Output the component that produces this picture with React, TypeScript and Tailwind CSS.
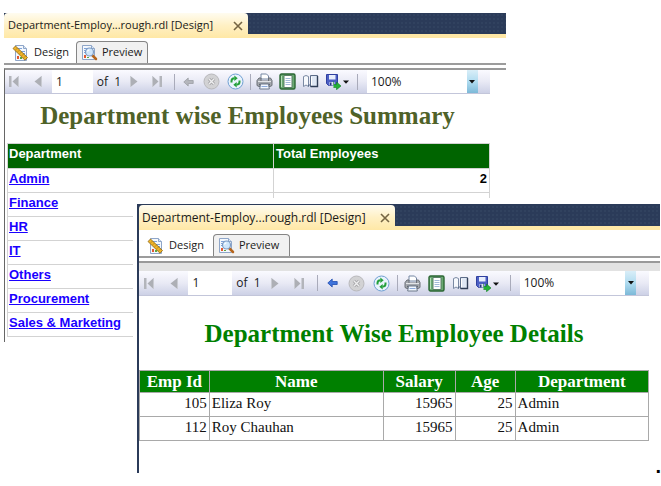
import type { ReactNode } from "react";
import clsx from "clsx";

const uiFont = "font-['Open_Sans','Noto_Sans',sans-serif]";
const serifFont = "font-['Liberation_Serif',serif]";
const sansFont = "font-['Liberation_Sans',sans-serif]";

function DesignIcon() {
  return (
    <svg width="17" height="16" viewBox="0 0 17 16" aria-hidden="true">
      <path d="M3.5.5h8l3 3v12h-11z" fill="#f4f8fd" stroke="#8fa6c8" />
      <path d="M11.5.5v3h3" fill="#dbe6f5" stroke="#8fa6c8" />
      <path d="M6 3.5h4M9 6.5h4M10 8.5h3" stroke="#7fa3da" />
      <path d="M5 11h2v3H5z" fill="#e2572f" />
      <path d="M8 12h2v2H8z" fill="#5aa845" />
      <path d="M1 3.5 3.5 1l12 11.5-2.5 2.7z" fill="#f0b429" stroke="#8b6410" strokeWidth=".8" />
      <path d="m5 3.5-1 1m3 1-1 1m3 1-1 1m3 1-1 1m3 1-1 1" stroke="#7b5710" strokeWidth=".8" />
    </svg>
  );
}

function PreviewIcon() {
  return (
    <svg width="17" height="16" viewBox="0 0 17 16" aria-hidden="true">
      <path d="M1.5.5h9l3 3v11h-12z" fill="#f4f8fd" stroke="#8fa6c8" />
      <path d="M10.5.5v3h3" fill="#dbe6f5" stroke="#8fa6c8" />
      <path d="M3 3.5h3M3 5.5h2M3 7.5h2" stroke="#7fa3da" />
      <path d="M3 10h2v3H3z" fill="#e2572f" />
      <path d="M6 12h2v1H6z" fill="#5aa845" />
      <path d="m11.5 10.500 3.500 3.500" stroke="#b5651d" strokeWidth="2.500" strokeLinecap="round" />
      <circle cx="8.500" cy="7" r="4" fill="#cfe6fb" stroke="#7d9cc4" strokeWidth="1.200" />
      <path d="M6.500 6.500a2.200 2.200 0 0 1 1.900-1.600" fill="none" stroke="#fff" strokeWidth="1.200" />
    </svg>
  );
}

function StepIcon({ end = false, flip = false }: { end?: boolean; flip?: boolean }) {
  return (
    <svg width="12" height="13" viewBox="0 0 12 13" aria-hidden="true" className={clsx(flip && "-scale-x-100")}>
      {end && <path d="M1 1h2.500v11H1z" fill="#b3b5bb" />}
      <path d={end ? "M10.500 1v11L4.500 6.500z" : "M9.500 1v11L2.500 6.500z"} fill="#adafb5" />
      <path d={end ? "M10.500 1v11" : "M9.500 1v11"} stroke="#c9cbd2" />
    </svg>
  );
}

function BackIcon({ active }: { active: boolean }) {
  return (
    <svg width="11" height="10" viewBox="0 0 11 10" aria-hidden="true">
      <path
        d="M.8 5 5.200 1v2.500h5v3h-5V9z"
        fill={active ? "#3f74dc" : "#b4b6bc"}
        stroke={active ? "#214eb0" : "#9c9ea5"}
        strokeWidth=".8"
      />
    </svg>
  );
}

function StopIcon() {
  return (
    <svg width="17" height="17" viewBox="0 0 17 17" aria-hidden="true">
      <circle cx="8.500" cy="8.500" r="7.500" fill="#d2d2d4" stroke="#b9b9bc" />
      <path d="m5.800 5.800 5.400 5.400m0-5.400-5.400 5.400" stroke="#a2a2a5" strokeWidth="3" />
      <path d="m5.800 5.800 5.400 5.400m0-5.400-5.400 5.400" stroke="#eeeeef" strokeWidth="1.400" />
    </svg>
  );
}

function RefreshIcon() {
  return (
    <svg width="17" height="17" viewBox="0 0 17 17" aria-hidden="true">
      <circle cx="8.500" cy="8.500" r="7.500" fill="#e9f3fd" stroke="#6f9fd2" />
      <path d="M4.500 9.500V8q0-2.500 3-2.700" fill="none" stroke="#23a03a" strokeWidth="2" />
      <path d="M7.300 2.500v5.400l3.400-2.700z" fill="#23a03a" />
      <path d="M12.500 7.500V9q0 2.500-3 2.700" fill="none" stroke="#23a03a" strokeWidth="2" />
      <path d="M9.700 9.100v5.400l-3.400-2.700z" fill="#23a03a" />
    </svg>
  );
}

function PrintIcon() {
  return (
    <svg width="17" height="17" viewBox="0 0 17 17" aria-hidden="true">
      <path d="M5 6V1h5.500L12.500 3v3z" fill="#fff" stroke="#7587a3" />
      <path d="M3 5h2v3h7.500V5h2L16 7.500v5l-2 1H3l-2-1v-5z" fill="#a4a8ae" stroke="#6c7178" />
      <path d="M2 8.500h13" stroke="#e3e5e8" />
      <path d="M3 11.500h11" stroke="#63676e" strokeWidth="1.500" />
      <path d="M4.500 11h8l.8 5H3.700z" fill="#f2f7ff" stroke="#6c7889" />
      <path d="M5.500 13.500h6" stroke="#8cabdc" />
    </svg>
  );
}

function LayoutIcon() {
  return (
    <svg width="17" height="17" viewBox="0 0 17 17" aria-hidden="true">
      <rect x="1" y="1" width="15" height="15" rx="1.500" fill="#69a971" stroke="#2b6634" strokeWidth="1.400" />
      <path d="M2.500 3v11" stroke="#b5dcb8" />
      <path d="M5 2.500h8v12H5z" fill="#fff" stroke="#5b7f68" />
      <path d="M6.500 5.500h5m-5 2h5m-5 2h5m-5 2h5" stroke="#a3b9d8" />
    </svg>
  );
}

function PageSetupIcon() {
  return (
    <svg width="17" height="15" viewBox="0 0 17 15" aria-hidden="true">
      <path d="M1.500 2.500 4 1.500l2.500 1v10L4 11l-2.500 1.500z" fill="#f7f9fd" stroke="#7a89a3" />
      <path d="M6.500 12.500V11H8" fill="none" stroke="#596a88" />
      <path d="M8.500 1.500h7v11h-7z" fill="#dfe7f4" stroke="#5d6d89" />
      <path d="M9.500 3v8.500" stroke="#fff" />
      <path d="M15.500 2v10.500h-7" fill="none" stroke="#2f3d56" strokeWidth="1.400" />
    </svg>
  );
}

function ExportIcon() {
  return (
    <svg width="24" height="17" viewBox="0 0 24 17" aria-hidden="true">
      <path d="M1.500 1.500h11v11h-9l-2-2z" fill="#4c5fc4" stroke="#3040a0" />
      <path d="M4 2h6.500v4.500H4z" fill="#e8eefc" />
      <path d="M4.500 9h5v3.500h-5z" fill="#dfe4f4" />
      <path d="M5 9.500h1.500v3H5z" fill="#26347e" />
      <path d="M8.500 8.500v3h3V9l4.500 4-4.500 3.700V14.500H8.500" fill="#25b337" stroke="#138022" strokeWidth=".6" />
      <path d="M18 7.500h6l-3 3.300z" fill="#111" />
    </svg>
  );
}

function ToolButton({ label, start = false, children }: { label: string; start?: boolean; children: ReactNode }) {
  return (
    <button
      type="button"
      aria-label={label}
      className={clsx("flex min-w-0 items-center", start ? "justify-start pl-1" : "justify-center")}
    >
      {children}
    </button>
  );
}

function Separator() {
  return (
    <div className="flex min-w-0 items-center justify-center">
      <div className="h-4 w-px bg-[#a9abba]" />
    </div>
  );
}

function Toolbar({ canGoBack }: { canGoBack: boolean }) {
  return (
    <div
      className={clsx(
        uiFont,
        "grid grid-cols-[19fr_28fr_41fr_32fr_18fr_28fr_8fr_20fr_26fr_22fr_7fr_22fr_24fr_21fr_31fr_12fr_3fr_111fr_12fr] border-b border-[#c3c6da] bg-linear-to-b from-[#fafaff] via-[#e9eaf5] to-[#cdd1e6] text-xs text-[#1a1a1a]",
        canGoBack ? "h-[25px]" : "h-6",
      )}
    >
      <ToolButton label="First page"><StepIcon end /></ToolButton>
      <ToolButton label="Previous page"><StepIcon /></ToolButton>
      <input
        type="text"
        aria-label="Current page"
        defaultValue="1"
        className="min-w-0 bg-white pl-1 outline-none"
      />
      <span className="flex min-w-0 items-center justify-center whitespace-pre">of  1</span>
      <ToolButton label="Next page"><StepIcon flip /></ToolButton>
      <ToolButton label="Last page"><StepIcon end flip /></ToolButton>
      <Separator />
      <ToolButton label="Back to parent report"><BackIcon active={canGoBack} /></ToolButton>
      <ToolButton label="Stop"><StopIcon /></ToolButton>
      <ToolButton label="Refresh"><RefreshIcon /></ToolButton>
      <Separator />
      <ToolButton label="Print"><PrintIcon /></ToolButton>
      <ToolButton label="Print layout"><LayoutIcon /></ToolButton>
      <ToolButton label="Page setup"><PageSetupIcon /></ToolButton>
      <ToolButton label="Export" start><ExportIcon /></ToolButton>
      <Separator />
      <span />
      <div className="relative flex min-w-0 bg-white">
        <select aria-label="Zoom" defaultValue="100" className="w-full appearance-none bg-white pl-1 outline-none">
          <option value="50">50%</option>
          <option value="100">100%</option>
          <option value="200">200%</option>
        </select>
        <span className="pointer-events-none absolute inset-y-0 right-0 flex w-[11px] items-center justify-center bg-linear-to-b from-[#d9eef8] via-[#b0dcf0] to-[#7cb9d8]">
          <svg width="6" height="4" viewBox="0 0 6 4" aria-hidden="true">
            <path d="M0 0h6L3 3.500z" fill="#111" />
          </svg>
        </span>
      </div>
      <span />
    </div>
  );
}

function DesignerWindow({ wide = false, children }: { wide?: boolean; children: ReactNode }) {
  return (
    <section className={clsx("bg-white", wide && "border-t border-l-2 border-[#2b3b59]")}>
      <div className="flex items-start border-b-4 border-[#ffe8a6] bg-[#2b3b59] bg-[radial-gradient(#31425f_1px,transparent_1px)] bg-size-[4px_4px]">
        <div
          className={clsx(
            uiFont,
            "-mb-1 flex h-[25px] items-center justify-between rounded-t-sm bg-linear-to-b from-[#fffcf0] via-[#fff0c4] to-[#ffe8a6] pr-1 whitespace-nowrap text-[#1a1a1a]",
            wide ? "w-64 pl-[3px] text-xs" : "w-[244px] pl-1 text-[11px]",
          )}
        >
          <span>Department-Employ...rough.rdl [Design]</span>
          <button type="button" aria-label="Close" className="p-px">
            <svg width="10" height="10" viewBox="0 0 10 10" aria-hidden="true">
              <path d="m1 1 8 8m0-8-8 8" stroke="#756543" strokeWidth="1.600" />
            </svg>
          </button>
        </div>
      </div>
      <div
        className={clsx(
          uiFont,
          "flex items-end border-b-2 border-[#9c9c9c] text-[11px] text-[#1a1a1a]",
          wide ? "h-7" : "h-[27px]",
        )}
      >
        <button type="button" className="flex h-[21px] w-[72px] items-center gap-1 pl-2 whitespace-nowrap">
          <DesignIcon />
          <span className="pl-px">Design</span>
        </button>
        <button
          type="button"
          className={clsx(
            "flex h-[22px] items-center gap-1 rounded-t-sm border border-b-0 border-[#858585] bg-[#f1f1f1] pl-1 whitespace-nowrap",
            wide ? "ml-0.5 w-[77px]" : "w-[72px]",
          )}
        >
          <PreviewIcon />
          <span>Preview</span>
        </button>
      </div>
      <div className={clsx("mt-[3px] border-t-2 border-[#999]", !wide && "border-l border-l-[#666]")}>
        {wide && <div className="h-2 bg-[#e2e2e2]" />}
        {children}
      </div>
    </section>
  );
}

const departments: { name: string; total?: number }[] = [
  { name: "Admin", total: 2 },
  { name: "Finance", total: 3 },
  { name: "HR" },
  { name: "IT" },
  { name: "Others" },
  { name: "Procurement" },
  { name: "Sales & Marketing" },
];

const employees = [
  { id: 105, name: "Eliza Roy", salary: 15965, age: 25, department: "Admin" },
  { id: 112, name: "Roy Chauhan", salary: 15965, age: 25, department: "Admin" },
];

function SummaryReport() {
  return (
    <DesignerWindow>
      <div className="pr-4 pb-[5px]">
        <Toolbar canGoBack={false} />
        <h1 className={clsx(serifFont, "pt-1 text-center text-[25px] leading-9 font-bold whitespace-nowrap text-[#4f6228]")}>
          Department wise Employees Summary
        </h1>
        <div className="pt-[9px] pl-[2px]">
          <table className={clsx(sansFont, "w-full table-fixed border-collapse text-[13px] leading-5 font-bold")}>
            <colgroup>
              <col className="w-[55.2%]" />
              <col />
            </colgroup>
            <thead>
              <tr className="h-[25px] bg-[#006400] text-left align-top text-white">
                <th className="border border-[#d3d3d3] px-px">Department</th>
                <th className="border border-[#d3d3d3] px-[2px]">Total Employees</th>
              </tr>
            </thead>
            <tbody>
              {departments.map(({ name, total }) => (
                <tr key={name} className="h-6 align-top">
                  <td className="border border-[#d3d3d3] px-px">
                    <a href="#details" className="text-[#1a00ff] underline">{name}</a>
                  </td>
                  <td className="border border-[#d3d3d3] px-[2px] text-right text-black">{total}</td>
                </tr>
              ))}
            </tbody>
          </table>
        </div>
      </div>
    </DesignerWindow>
  );
}

function DetailsReport() {
  const head = "border border-[#a9a9a9] p-0";
  const cell = "border border-[#a9a9a9] px-[2px] py-0";
  return (
    <DesignerWindow wide>
      <div className="pr-[11px] pb-8">
        <Toolbar canGoBack />
        <h2
          id="details"
          className={clsx(serifFont, "pt-5 text-center text-[25px] leading-9 font-bold whitespace-nowrap text-[#008000]")}
        >
          Department Wise Employee Details
        </h2>
        <div className="pt-[18px]">
          <table className={clsx(serifFont, "w-full table-fixed border-collapse text-[15px] leading-5 text-[#111]")}>
            <colgroup>
              <col className="w-[13.7%]" />
              <col className="w-[34.2%]" />
              <col className="w-[14.1%]" />
              <col className="w-[11.8%]" />
              <col />
            </colgroup>
            <thead>
              <tr className="h-[22px] bg-[#008000] text-[17px] text-white">
                <th className={head}>Emp Id</th>
                <th className={head}>Name</th>
                <th className={head}>Salary</th>
                <th className={head}>Age</th>
                <th className={head}>Department</th>
              </tr>
            </thead>
            <tbody>
              {employees.map((e) => (
                <tr key={e.id} className="h-6 align-top">
                  <td className={clsx(cell, "text-right")}>{e.id}</td>
                  <td className={cell}>{e.name}</td>
                  <td className={clsx(cell, "text-right")}>{e.salary}</td>
                  <td className={clsx(cell, "text-right")}>{e.age}</td>
                  <td className={cell}>{e.department}</td>
                </tr>
              ))}
            </tbody>
          </table>
        </div>
      </div>
    </DesignerWindow>
  );
}

export default function App() {
  return (
    <main className="relative min-h-screen overflow-hidden bg-white pt-[13px] pl-1">
      <div className="w-[76.4%]">
        <SummaryReport />
      </div>
      <div className="absolute top-[198px] right-0 left-[133px] bg-white pt-[6px] pr-px pb-3 pl-1">
        <DetailsReport />
        <span className={clsx(sansFont, "absolute right-0 bottom-[9px] text-xl leading-none font-bold text-black")}>.</span>
      </div>
    </main>
  );
}
